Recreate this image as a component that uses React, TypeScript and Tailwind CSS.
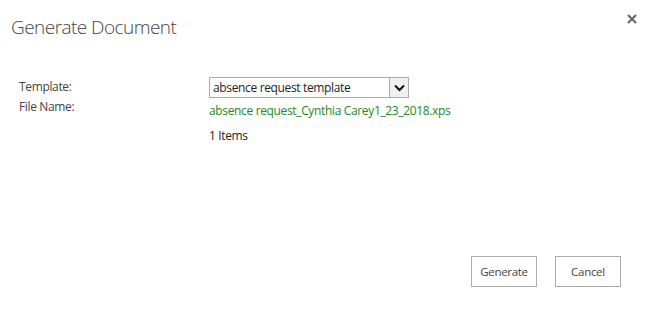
import React from "react";

export default function App() {
  const font = { fontFamily: '"Open Sans", "Noto Sans", sans-serif' };
  return (
    <div className="w-[650px] h-[313px] bg-white flex flex-col text-[#444]" style={font}>
      <div className="flex justify-between items-start pl-[11px] pr-[13px] pt-[14px]">
        <h1 className="text-[19px] font-light leading-[26px] tracking-[-0.55px] text-[#444]">Generate Document</h1>
        <button className="w-[10px] h-[10px] mt-[0px]" aria-label="Close">
          <svg width="10" height="10" viewBox="0 0 10 10">
            <path d="M1 1 L9 9 M9 1 L1 9" stroke="#666" strokeWidth="2" />
          </svg>
        </button>
      </div>
      <div className="grid grid-cols-[190px_1fr] items-start pl-[19px] mt-[37px] text-[12px] tracking-[-0.35px]">
        <div className="h-[20px] leading-[20px]">Template:</div>
        <div>
          <div className="flex w-[200px] h-[21px] border border-[#ababab] bg-white">
            <div className="flex-1 pl-[3px] leading-[19px] text-[#222] whitespace-nowrap overflow-hidden">absence request template</div>
            <div className="w-[19px] h-[19px] border-l border-[#ababab] bg-[#f0f0f0] flex items-center justify-center">
              <svg width="11" height="8" viewBox="0 0 11 8">
                <path d="M1 1.5 L5.5 6 L10 1.5" stroke="#111" strokeWidth="2" fill="none" />
              </svg>
            </div>
          </div>
        </div>
        <div className="h-[20px] leading-[20px] -mt-[1px]">File Name:</div>
        <div className="h-[20px] leading-[20px] mt-[3px] text-[#228822]">absence request_Cynthia Carey1_23_2018.xps</div>
        <div></div>
        <div className="h-[20px] leading-[20px] mt-[5px] text-[#222]">1 Items</div>
      </div>
      <div className="flex-1" />
      <div className="flex justify-end gap-[18px] pr-[29px] pb-[26px]">
        <button className="w-[66px] h-[31px] border border-[#ababab] bg-white text-[11.5px] tracking-[-0.3px] text-[#444]">Generate</button>
        <button className="w-[66px] h-[31px] border border-[#ababab] bg-white text-[11.5px] tracking-[-0.3px] text-[#444]">Cancel</button>
      </div>
    </div>
  );
}
